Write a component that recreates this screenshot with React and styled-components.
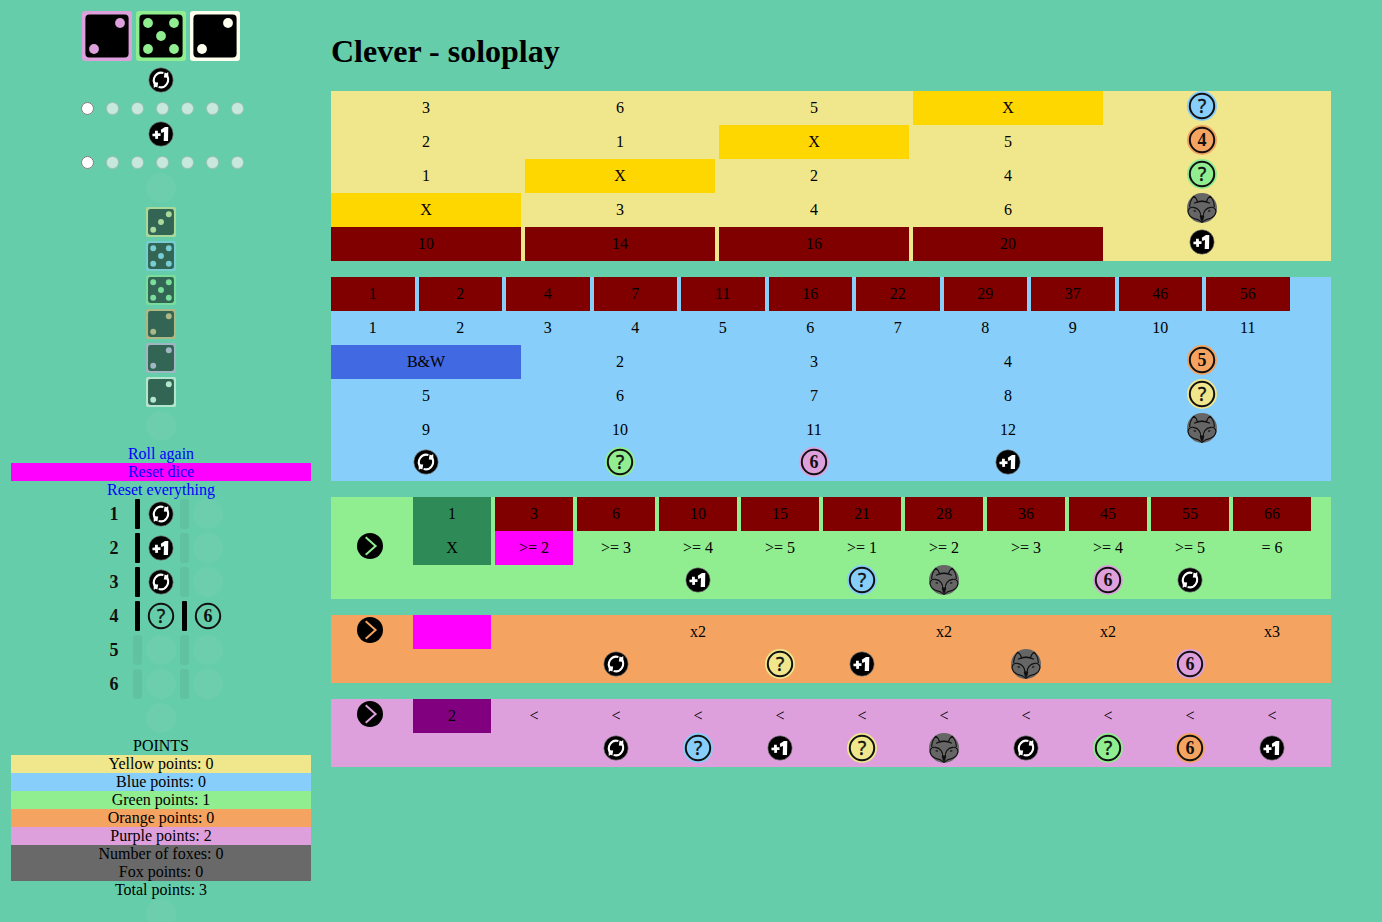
import React from 'react';
import styled, { createGlobalStyle, css } from 'styled-components';

const color = {
  page: '#66cdaa',
  yellow: '#f0e68c',
  blue: '#87cefa',
  green: '#90ee90',
  orange: '#f4a460',
  purple: '#dda0dd',
  white: '#fffff0',
  fox: '#696969',
  next: '#ff00ff',
  score: '#800000',
};

const GlobalStyle = createGlobalStyle`
  body {
    margin: 0;
    background: ${color.page};
    color: #000;
    font: 16px/18px 'Liberation Serif', 'Times New Roman', serif;
  }
`;

const Page = styled.div`
  display: flex;
  align-items: flex-start;
  gap: 20px;
  padding: 11px 11px 0;
`;

const Sidebar = styled.aside`
  display: flex;
  flex-direction: column;
  align-items: center;
  flex: 0 0 300px;
  text-align: center;
`;

const Board = styled.main`
  flex: 1;
  min-width: 0;
  max-width: 1000px;
  padding-top: 21px;
`;

const Title = styled.h1`
  margin: 0 0 21px;
  font-size: 32px;
  line-height: 38px;
`;

const RolledDice = styled.div`
  display: flex;
  gap: 4px;
  margin-bottom: 4px;
`;

const Stack = styled.div`
  display: flex;
  flex-direction: column;
  align-items: center;
  gap: 4px;
  margin-bottom: 4px;
`;

const Uses = styled.div`
  display: flex;
  align-items: center;
  gap: 4px;
  height: 24px;
`;

const UseRadio = styled.input`
  margin: 3px 3px 0 5px;
`;

const DieButton = styled.button`
  display: block;
  padding: 0;
  border: 0;
  background: none;
  opacity: ${(p) => (p.$dim ? 0.5 : 1)};
`;

const Drawing = styled.svg`
  display: block;
  flex: none;
`;

const Actions = styled.nav`
  align-self: stretch;
`;

const Action = styled.a`
  display: block;
  color: #0000ff;
  text-decoration: none;
  background: ${(p) => (p.$active ? color.next : 'none')};
`;

const Round = styled.div`
  display: flex;
  gap: 4px;
`;

const RoundBar = styled.span`
  width: ${(p) => (p.$filled ? 5 : 9)}px;
  margin: 0 ${(p) => (p.$filled ? 2 : 0)}px;
  height: 30px;
  border-radius: ${(p) => (p.$filled ? 1 : 3)}px;
  background: ${(p) => (p.$filled ? '#000' : 'rgba(0, 0, 0, 0.05)')};
`;

const EmptySlot = styled.span`
  width: 30px;
  height: 30px;
  border-radius: 50%;
  background: rgba(255, 255, 255, 0.04);
`;

const Points = styled.section`
  align-self: stretch;
`;

const PointsRow = styled.div`
  background: ${(p) => p.$bg || 'none'};
`;

const Panel = styled.section`
  margin-bottom: 16px;
  background: ${(p) => p.$bg};
`;

const Row = styled.div`
  display: grid;
  grid-template-columns: repeat(${(p) => p.$layout});
  column-gap: 4px;
  height: 34px;
`;

const cellStyle = css`
  display: flex;
  align-items: center;
  justify-content: center;
  background: ${(p) => p.$bg || 'none'};
`;

const Cell = styled.div`
  ${cellStyle}
`;

const Field = styled.button`
  ${cellStyle}
  padding: 0;
  border: 0;
  color: inherit;
  font: inherit;
`;

const Bonus = styled.div`
  display: flex;
  justify-content: center;
  align-items: flex-start;
`;

const ArrowButton = styled.button`
  display: flex;
  justify-content: center;
  align-items: flex-start;
  padding: 0;
  border: 0;
  background: none;
`;

const pips = {
  2: [[38, 12], [12, 38]],
  3: [[38, 12], [25, 25], [12, 38]],
  5: [[12, 12], [38, 12], [25, 25], [12, 38], [38, 38]],
};

function Die({ tint, value, size = 50, dim }) {
  return (
    <DieButton type="button" $dim={dim} aria-label={`${tint} die, ${value}`}>
      <Drawing width={size} height={size} viewBox="0 0 50 50">
        <rect width="50" height="50" rx="3" fill={color[tint]} />
        <rect x="3.4" y="3.4" width="43.2" height="43.2" rx="4" fill="#000" />
        {pips[value].map(([x, y]) => (
          <circle key={`${x}-${y}`} cx={x} cy={y} r="4.9" fill={color[tint]} />
        ))}
      </Drawing>
    </DieButton>
  );
}

function Glyph({ char }) {
  const question = char === '?';
  return (
    <text
      x="15"
      y={question ? 22 : 21}
      textAnchor="middle"
      fontFamily={question ? "'Noto Sans', sans-serif" : "'Liberation Serif', serif"}
      fontSize={question ? 19 : 18}
      fontWeight={question ? 400 : 700}
      fill="#111"
      stroke="#111"
      strokeWidth={question ? 0.4 : 0}
    >
      {char}
    </text>
  );
}

function Coin({ tint, char }) {
  return (
    <Drawing width="30" height="30" viewBox="0 0 30 30" role="img" aria-label={`${tint || 'any'} ${char}`}>
      {tint && <circle cx="15" cy="15" r="15" fill={color[tint]} />}
      <circle cx="15" cy="15" r="12.2" fill="none" stroke="#111" strokeWidth="2" />
      <Glyph char={char} />
    </Drawing>
  );
}

function Reroll() {
  return (
    <Drawing width="30" height="30" viewBox="0 0 30 30" role="img" aria-label="reroll">
      <circle cx="15" cy="15" r="12.2" fill="#000" stroke="#8b8b8b" strokeWidth="0.6" />
      <g fill="none" stroke="#fff" strokeWidth="2.1">
        <path d="M9.6 19.8A7.4 7.4 0 0 1 17.4 8" />
        <path d="M20.4 10.2A7.4 7.4 0 0 1 12.6 22" />
      </g>
      <path d="M17.8 12.6l.8-5.2 2 .8 1.6-1.2.2 5.8zM12.2 17.4l-.8 5.2-2-.8L7.800 23l-.2-5.8z" fill="#fff" />
    </Drawing>
  );
}

function PlusOne() {
  return (
    <Drawing width="30" height="30" viewBox="0 0 30 30" role="img" aria-label="plus one">
      <circle cx="15" cy="15" r="12.2" fill="#000" stroke="#8b8b8b" strokeWidth="0.6" />
      <path d="M6.4 14.7l2.6-.2v-2.7l2.8-.1.1 2.6 2.6-.1v2.7l-2.5.1.1 2.8-2.8.1-.1-2.7-2.7.1z" fill="#fff" />
      <path d="M14.8 10.8l4.2-2.9h3.3l-.3 14.1h-4.3l.3-9-2.7 1z" fill="#fff" />
    </Drawing>
  );
}

function Fox() {
  return (
    <Drawing width="30" height="30" viewBox="0 0 90 90" role="img" aria-label="fox">
      <circle cx="45" cy="45" r="45" fill="#666" />
      <g fill="none" stroke="#111" strokeWidth="3.4" strokeLinejoin="round">
        <path d="M8 42C8 30 13 18 20 10c7 4 10 9 11 16q14-4 28 0c1-7 4-12 11-16 7 8 12 20 12 32" />
        <path d="M21 31q24-12 48 0" />
        <path d="M3 56C4 46 10 42 19 43c15 2 24 14 22 29M87 56c-1-10-7-14-16-13-15 2-24 14-22 29" />
        <path d="M3 56q3 15 17 20 15 2 25 12 10-10 25-12 14-5 17-20" />
      </g>
      <path d="M19 52h8v4h-6zM71 52h-8v4h6z" fill="#222" />
      <path d="M38 69q7-5 14 0l-3 12-4 5-4-5z" fill="#111" />
    </Drawing>
  );
}

function Arrow({ tint }) {
  return (
    <ArrowButton type="button" aria-label={`${tint} row`}>
      <Drawing width="30" height="30" viewBox="0 0 30 30">
        <circle cx="15" cy="15" r="13" fill="#000" />
        <path d="M10.7 6.2L20.6 15 10.7 23.8" fill="none" stroke={color[tint]} strokeWidth="2" />
      </Drawing>
    </ArrowButton>
  );
}

function RoundNumber({ n }) {
  return (
    <Drawing width="30" height="30" viewBox="0 0 30 30">
      <Glyph char={n} />
    </Drawing>
  );
}

// Bonus names: "reroll", "plus", "fox", or "<tint>:<char>" for a coin.
function BonusIcon({ name }) {
  if (name === 'reroll') return <Reroll />;
  if (name === 'plus') return <PlusOne />;
  if (name === 'fox') return <Fox />;
  const [tint, char] = name.split(':');
  return <Coin tint={tint} char={char} />;
}

const layouts = {
  wide: '5, 19%',
  eleven: '11, 8.35%',
  twelve: '12, 7.8%',
};

const bonus = (name) => ({ bonus: name });
const field = (text, bg) => ({ field: text, bg });
const score = (text) => ({ text, bg: color.score });
const label = (text, bg) => ({ text, bg });
const blank = label('');
const x = field('X', '#ffd700');

const panels = [
  {
    tint: 'yellow',
    rows: [
      ['wide', [field(3), field(6), field(5), x, bonus('blue:?')]],
      ['wide', [field(2), field(1), x, field(5), bonus('orange:4')]],
      ['wide', [field(1), x, field(2), field(4), bonus('green:?')]],
      ['wide', [x, field(3), field(4), field(6), bonus('fox')]],
      ['wide', [score(10), score(14), score(16), score(20), bonus('plus')]],
    ],
  },
  {
    tint: 'blue',
    rows: [
      ['eleven', [1, 2, 4, 7, 11, 16, 22, 29, 37, 46, 56].map(score)],
      ['eleven', [1, 2, 3, 4, 5, 6, 7, 8, 9, 10, 11].map((n) => label(n))],
      ['wide', [label('B&W', '#4169e1'), field(2), field(3), field(4), bonus('orange:5')]],
      ['wide', [field(5), field(6), field(7), field(8), bonus('yellow:?')]],
      ['wide', [field(9), field(10), field(11), field(12), bonus('fox')]],
      ['wide', [bonus('reroll'), bonus('green:?'), bonus('purple:6'), bonus('plus')]],
    ],
  },
  {
    tint: 'green',
    rows: [
      ['twelve', [blank, label(1, '#2e8b57'), ...[3, 6, 10, 15, 21, 28, 36, 45, 55, 66].map(score)]],
      ['twelve', [
        { arrow: true }, field('X', '#2e8b57'), field('>= 2', color.next),
        ...['>= 3', '>= 4', '>= 5', '>= 1', '>= 2', '>= 3', '>= 4', '>= 5', '= 6'].map((t) => field(t)),
      ]],
      ['twelve', [blank, blank, blank, blank, bonus('plus'), blank, bonus('blue:?'), bonus('fox'), blank, bonus('purple:6'), bonus('reroll')]],
    ],
  },
  {
    tint: 'orange',
    rows: [
      ['twelve', [{ arrow: true }, field('', color.next), ...['', '', 'x2', '', '', 'x2', '', 'x2', '', 'x3'].map((t) => field(t))]],
      ['twelve', [blank, blank, blank, bonus('reroll'), blank, bonus('yellow:?'), bonus('plus'), blank, bonus('fox'), blank, bonus('purple:6')]],
    ],
  },
  {
    tint: 'purple',
    rows: [
      ['twelve', [{ arrow: true }, field(2, '#800080'), ...Array(10).fill(field('<'))]],
      ['twelve', [
        blank, blank, blank,
        ...['reroll', 'blue:?', 'plus', 'yellow:?', 'fox', 'reroll', 'green:?', 'orange:6', 'plus'].map(bonus),
      ]],
    ],
  },
];

function BoardCell({ item, tint }) {
  if (item.arrow) return <Arrow tint={tint} />;
  if (item.bonus) return <Bonus><BonusIcon name={item.bonus} /></Bonus>;
  if ('field' in item) return <Field type="button" $bg={item.bg}>{item.field}</Field>;
  return <Cell $bg={item.bg}>{item.text}</Cell>;
}

const rounds = [['reroll'], ['plus'], ['reroll'], [':?', ':6'], [], []];

const points = [
  ['POINTS'],
  ['Yellow points: 0', color.yellow],
  ['Blue points: 0', color.blue],
  ['Green points: 1', color.green],
  ['Orange points: 0', color.orange],
  ['Purple points: 2', color.purple],
  ['Number of foxes: 0', color.fox],
  ['Fox points: 0', color.fox],
  ['Total points: 3'],
];

function UseTrack({ name }) {
  return (
    <Uses>
      {[1, 2, 3, 4, 5, 6, 7].map((n) => (
        <UseRadio key={n} type="radio" name={`${name}-${n}`} aria-label={`${name} ${n}`} disabled={n > 1} />
      ))}
    </Uses>
  );
}

export default function App() {
  return (
    <>
      <GlobalStyle />
      <Page>
        <Sidebar>
          <RolledDice>
            <Die tint="purple" value={2} />
            <Die tint="green" value={5} />
            <Die tint="white" value={2} />
          </RolledDice>
          <Reroll />
          <UseTrack name="reroll" />
          <PlusOne />
          <UseTrack name="plus one" />
          <Stack>
            <EmptySlot />
            <Die tint="yellow" value={3} size={30} dim />
            <Die tint="blue" value={5} size={30} dim />
            <Die tint="green" value={5} size={30} dim />
            <Die tint="orange" value={2} size={30} dim />
            <Die tint="purple" value={2} size={30} dim />
            <Die tint="white" value={2} size={30} dim />
            <EmptySlot />
          </Stack>
          <Actions>
            <Action href="#roll">Roll again</Action>
            <Action href="#reset-dice" $active>Reset dice</Action>
            <Action href="#reset">Reset everything</Action>
          </Actions>
          <Stack>
            {rounds.map((items, i) => (
              <Round key={i}>
                <RoundNumber n={i + 1} />
                {[0, 1].map((slot) => (
                  <React.Fragment key={slot}>
                    <RoundBar $filled={slot < items.length} />
                    {items[slot] ? <BonusIcon name={items[slot]} /> : <EmptySlot />}
                  </React.Fragment>
                ))}
              </Round>
            ))}
            <EmptySlot />
          </Stack>
          <Points>
            {points.map(([text, bg]) => (
              <PointsRow key={text} $bg={bg}>{text}</PointsRow>
            ))}
          </Points>
          <EmptySlot />
        </Sidebar>
        <Board>
          <Title>Clever - soloplay</Title>
          {panels.map((panel) => (
            <Panel key={panel.tint} $bg={color[panel.tint]}>
              {panel.rows.map(([layout, items], r) => (
                <Row key={r} $layout={layouts[layout]}>
                  {items.map((item, i) => (
                    <BoardCell key={i} item={item} tint={panel.tint} />
                  ))}
                </Row>
              ))}
            </Panel>
          ))}
        </Board>
      </Page>
    </>
  );
}
